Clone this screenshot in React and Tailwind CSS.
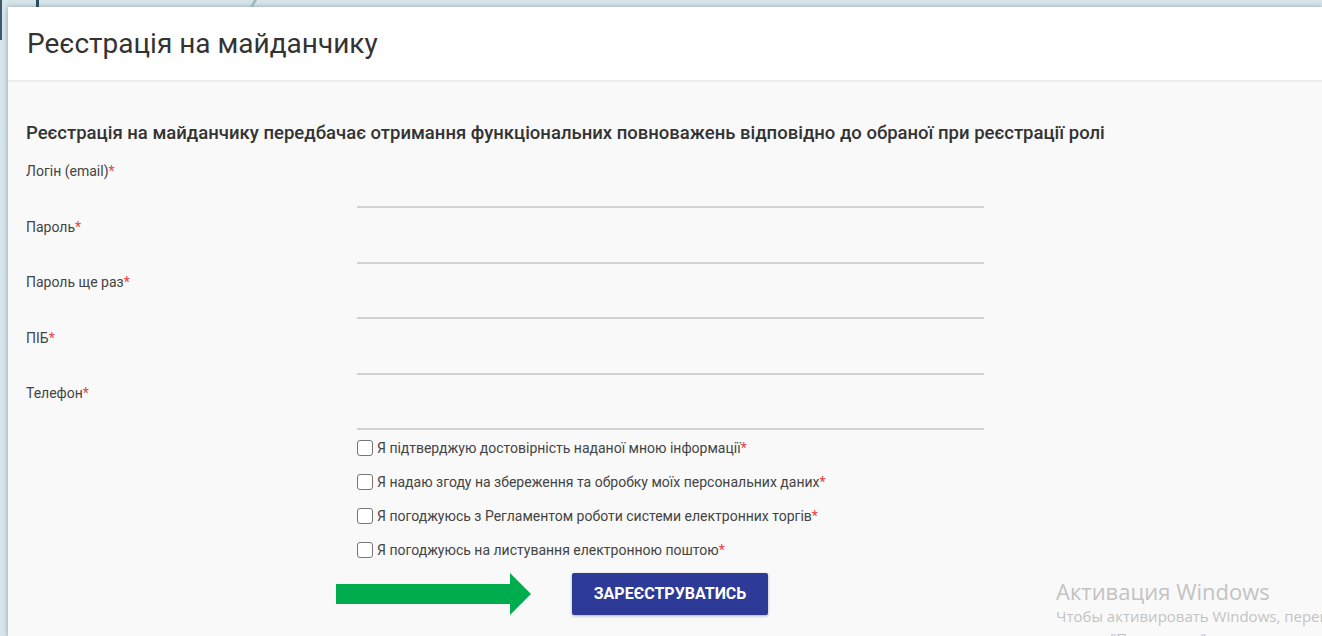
import React from 'react';

const fields = [
    { label: 'Логін (email)', type: 'email' },
    { label: 'Пароль', type: 'password' },
    { label: 'Пароль ще раз', type: 'password' },
    { label: 'ПІБ', type: 'text' },
    { label: 'Телефон', type: 'tel' },
];

const agreements = [
    'Я підтверджую достовірність наданої мною інформації',
    'Я надаю згоду на збереження та обробку моїх персональних даних',
    'Я погоджуюсь з Регламентом роботи системи електронних торгів',
    'Я погоджуюсь на листування електронною поштою',
];

function Required() {
    return <span className="text-[#e8413c]">*</span>;
}

function App() {
    return (
        <div
            className="relative h-[636px] overflow-hidden bg-[#d5e5eb] pt-[7px] pl-[8px]"
            style={{ fontFamily: 'Roboto, "Noto Sans", sans-serif' }}
        >
            {/* bits of the page backdrop peeking out above the card */}
            <div className="absolute left-[36px] top-0 h-[7px] w-[3px] bg-[#2f4b5b]" />
            <div className="absolute left-0 top-0 h-[40px] w-[2px] bg-[#3d5a69]" />
            <div className="absolute left-[252px] top-0 h-[7px] w-[3px] skew-x-[-30deg] bg-[#9fb6c0]" />

            <div className="h-full bg-white shadow-[0_0_5px_rgba(0,0,0,0.3)]">
                <div className="flex h-[75px] items-center border-b-2 border-[#ececec] px-[19px]">
                    <h1 className="text-[28px] font-normal text-[#333]">Реєстрація на майданчику</h1>
                </div>

                <div className="h-full bg-[#f9f9f9] px-[18px] pt-[39px]">
                    <p className="text-[18.5px] leading-6 font-medium text-[#333]">
                        Реєстрація на майданчику передбачає отримання функціональних повноважень відповідно до обраної при реєстрації ролі
                    </p>

                    <form className="mt-[16px]">
                        <div className="flex flex-col gap-[8.5px]">
                            {fields.map((f) => (
                                <div key={f.label} className="flex h-[47px] items-start">
                                    <label className="w-[331px] text-[14px] leading-5 text-[#444]">
                                        {f.label}
                                        <Required />
                                    </label>
                                    <input
                                        type={f.type}
                                        className="mt-[11px] h-[36px] w-[627px] border-b-2 border-[#d2d2d2] bg-transparent outline-none"
                                    />
                                </div>
                            ))}
                        </div>

                        <div className="mt-[1px] ml-[331px] flex flex-col">
                            {agreements.map((text) => (
                                <label key={text} className="flex h-[34px] items-center gap-[4px] text-[14px] text-[#444]">
                                    <span className="h-[16px] w-[16px] rounded-[3px] border border-[#767676] bg-white" />
                                    <span>
                                        {text}
                                        <Required />
                                    </span>
                                </label>
                            ))}
                        </div>

                        <div className="mt-[6px] flex items-center">
                            <svg width="196" height="42" viewBox="0 0 196 42" className="ml-[310px]">
                                <path d="M0 11 H174 V0 L195 21 L174 42 V31 H0 Z" fill="#00ad4e" />
                            </svg>
                            <button
                                type="button"
                                className="ml-[40px] h-[42px] w-[196px] rounded-[2px] bg-[#2e3a98] text-[16px] font-bold text-white shadow-[0_1px_3px_rgba(0,0,0,0.3)]"
                            >
                                ЗАРЕЄСТРУВАТИСЬ
                            </button>
                        </div>
                    </form>
                </div>
            </div>

            {/* OS activation watermark */}
            <div
                className="pointer-events-none absolute left-[1056px] top-[577px] whitespace-nowrap text-[#c3c3c3]"
                style={{ fontFamily: '"Open Sans", "Noto Sans", sans-serif' }}
            >
                <div className="text-[22px] leading-[28px]">Активация Windows</div>
                <div className="text-[15px] leading-[22px]">Чтобы активировать Windows, перейдите в</div>
                <div className="text-[15px] leading-[22px]">раздел "Параметры".</div>
            </div>
        </div>
    );
}

export default App;
